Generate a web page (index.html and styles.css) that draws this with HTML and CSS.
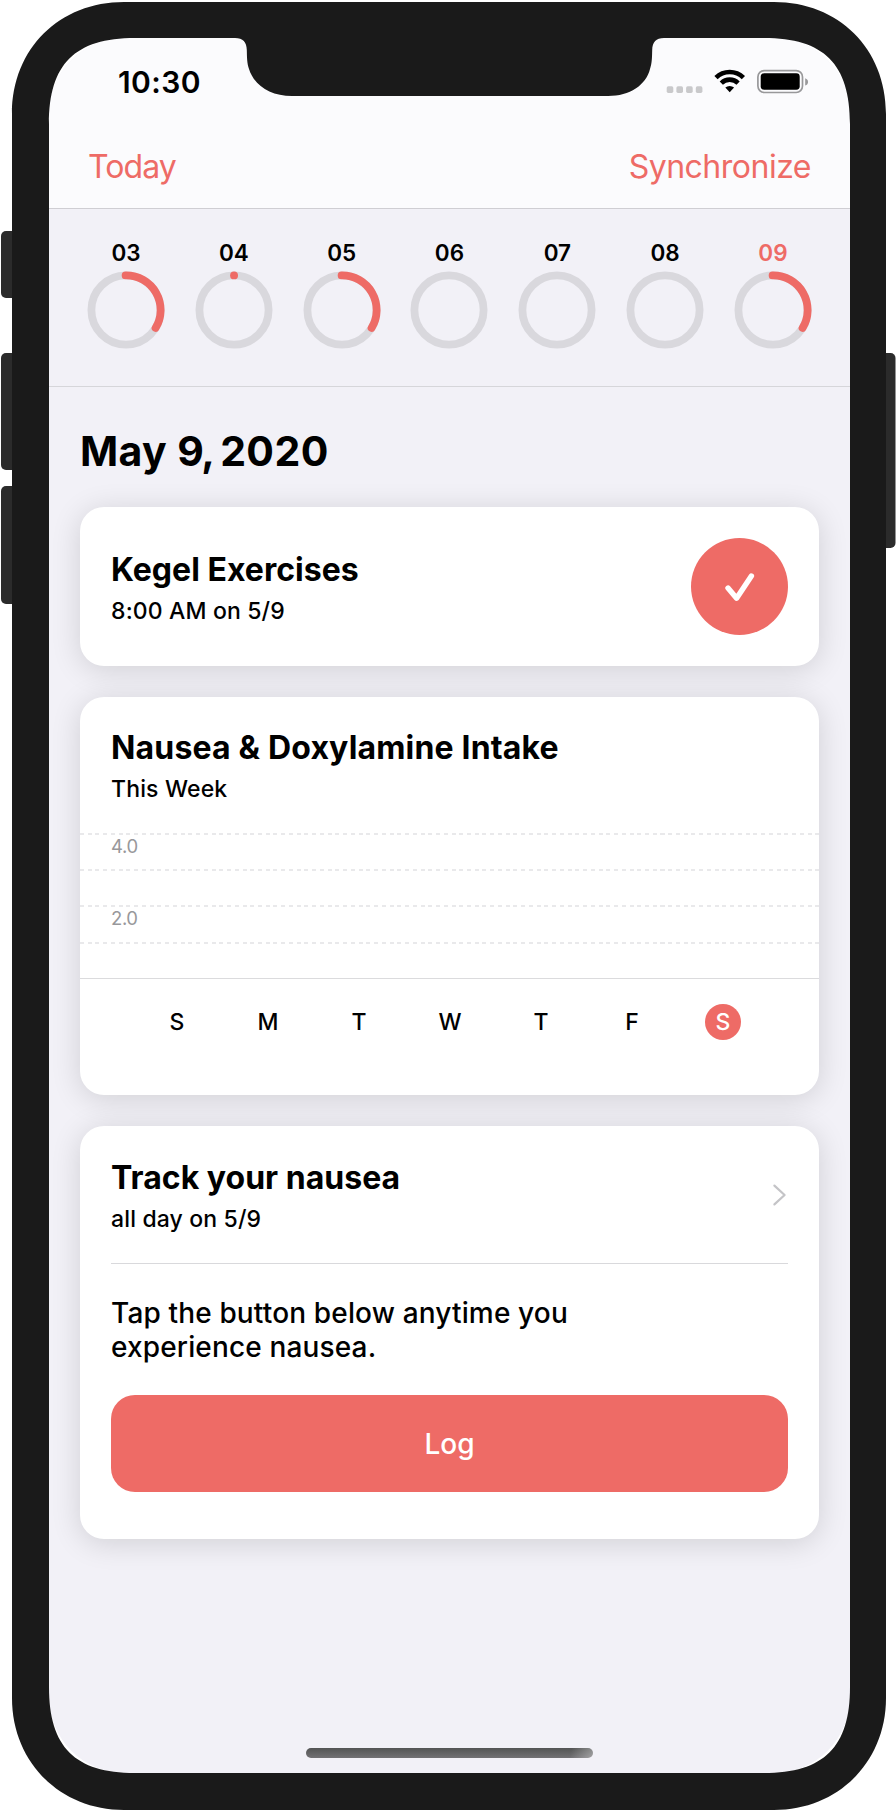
FILE: index.html
```html
<!DOCTYPE html>
<html lang="en">
<head>
<meta charset="utf-8">
<title>Care Plan</title>
<link rel="stylesheet" href="styles.css">
</head>
<body>
<div class="phone">
  <div class="screen">
    <header class="header">
      <div class="status">
        <span class="time">10:30</span>
        <svg class="status-icons" width="144" height="26" viewBox="0 0 144 26">
          <g fill="#c9c9cb">
            <rect x="1.7" y="17.3" width="6.6" height="6.6" rx="1.6"/>
            <rect x="11.4" y="17.3" width="6.6" height="6.6" rx="1.6"/>
            <rect x="21.1" y="17.3" width="6.6" height="6.6" rx="1.6"/>
            <rect x="30.8" y="17.3" width="6.6" height="6.6" rx="1.6"/>
          </g>
          <g fill="none" stroke="#000" stroke-width="4.6">
            <path d="M51 8.6a19.5 19.5 0 0 1 27.4 0"/>
            <path d="M56.3 14.1a12 12 0 0 1 16.8 0"/>
          </g>
          <path d="M60.3 18.6a6.6 6.6 0 0 1 8.8 0l-4.4 4.7z"/>
          <rect x="92.9" y="1.6" width="44.6" height="21.9" rx="6.4" fill="none" stroke="#98989a" stroke-width="1.7"/>
          <rect x="95.7" y="4.3" width="39" height="16.4" rx="3.4"/>
          <path d="M140.2 9.2c3.8 1.3 3.8 6.1 0 7.4z" fill="#98989a"/>
        </svg>
      </div>
      <nav class="nav">
        <a class="nav-today">Today</a>
        <a class="nav-sync">Synchronize</a>
      </nav>
    </header>
    <section class="week">
      <div class="day"><span>03</span><svg class="ring" viewBox="0 0 78 78"><circle cx="39" cy="39" r="34.6"/><path d="M38.6 4.4A34.6 34.6 0 0 1 68.6 57"/></svg></div>
      <div class="day"><span>04</span><svg class="ring" viewBox="0 0 78 78"><circle cx="39" cy="39" r="34.6"/><path d="M39 4.4h.1"/></svg></div>
      <div class="day"><span>05</span><svg class="ring" viewBox="0 0 78 78"><circle cx="39" cy="39" r="34.6"/><path d="M38.6 4.4A34.6 34.6 0 0 1 68.6 57"/></svg></div>
      <div class="day"><span>06</span><svg class="ring" viewBox="0 0 78 78"><circle cx="39" cy="39" r="34.6"/></svg></div>
      <div class="day"><span>07</span><svg class="ring" viewBox="0 0 78 78"><circle cx="39" cy="39" r="34.6"/></svg></div>
      <div class="day"><span>08</span><svg class="ring" viewBox="0 0 78 78"><circle cx="39" cy="39" r="34.6"/></svg></div>
      <div class="day current"><span>09</span><svg class="ring" viewBox="0 0 78 78"><circle cx="39" cy="39" r="34.6"/><path d="M38.6 4.4A34.6 34.6 0 0 1 68.6 57"/></svg></div>
    </section>
    <main class="main">
      <h1 class="date">May <span class="numeral">9</span><span class="comma">,</span> 2020</h1>
      <article class="card task">
        <div class="task-text">
          <h2 class="title kegel">Kegel Exercises</h2>
          <p class="subtitle at">8:00 AM on 5/9</p>
        </div>
        <svg class="check" width="97" height="97" viewBox="0 0 97 97">
          <circle cx="48.500" cy="48.500" r="48.5"/>
          <path d="M37 50L45.600 60.2L60.4 38"/>
        </svg>
      </article>
      <article class="card chart">
        <h2 class="title intake">Nausea &amp; Doxylamine Intake</h2>
        <p class="subtitle this-week">This Week</p>
        <div class="plot">
          <div class="band">4.0</div>
          <div class="band"></div>
          <div class="band tall">2.0</div>
          <div class="band"></div>
        </div>
        <div class="axis">
          <span>S</span><span>M</span><span>T</span><span>W</span><span>T</span><span>F</span><span class="selected">S</span>
        </div>
      </article>
      <article class="card log">
        <div class="log-head">
          <div>
            <h2 class="title track">Track your nausea</h2>
            <p class="subtitle all-day">all day on 5/9</p>
          </div>
          <svg class="chevron" width="16" height="24" viewBox="0 0 16 24"><path d="M3.4 2.6L13.6 12L3.4 21.4"/></svg>
        </div>
        <p class="hint">Tap the button below anytime you<br>experience nausea.</p>
        <button class="log-button">Log</button>
      </article>
    </main>
    <div class="home"></div>
  </div>
  <svg class="bezel" width="896" height="1812" viewBox="0 0 896 1812">
    <g fill="#2b2b2b">
      <rect x="1" y="231" width="20" height="67" rx="5"/>
      <rect x="1" y="353" width="20" height="117" rx="5"/>
      <rect x="1" y="486" width="20" height="118" rx="5"/>
      <rect x="875" y="353" width="20.5" height="195" rx="5"/>
    </g>
    <path fill="#1a1a1a" fill-rule="evenodd" d="M124 2H774C838 2 886 48 886 114V1698C886 1762 838 1810 774 1810H124C60 1810 12 1762 12 1698V114C12 48 60 2 124 2Z
      M135 38H235C243 38 246.600 42 246.800 50C247 58 247 63 249 69C254 85 270 96 292 96H608C630 96 646 85 650 69C652 63 652 58 652.200 50C652.400 42 656 38 664 38H764C824 38 850 64 850 124V1687C850 1747 824 1773 764 1773H135C75 1773 49 1747 49 1687V124C49 64 75 38 135 38Z"/>
  </svg>
</div>
</body>
</html>
```
FILE: styles.css
```css
* {
  box-sizing: border-box;
}

body {
  margin: 0;
  background: #fff;
  color: #000;
  font-family: Inter, "Liberation Sans", sans-serif;
}

h1, h2, p {
  margin: 0;
}

.phone {
  position: relative;
  width: 896px;
  height: 1812px;
  padding: 38px 46px 39px 49px;
  overflow: hidden;
}

.screen {
  display: flex;
  flex-direction: column;
  height: 1735px;
  border-radius: 76px;
  background: #f2f1f7;
}

/* The device frame lies over the screen and leaves the notch in place */
.bezel {
  position: absolute;
  inset: 0;
  pointer-events: none;
}

.header {
  height: 171px;
  border-bottom: 1px solid #cfced3;
  border-radius: 76px 76px 0 0;
  background: #fbfbfd;
}

.status {
  display: flex;
  align-items: center;
  justify-content: space-between;
  height: 88px;
  padding: 0 41px 0 69px;
}

.time {
  font-size: 30px;
  font-weight: 600;
  letter-spacing: 0.4px;
}

.nav {
  display: flex;
  align-items: center;
  justify-content: space-between;
  height: 80px;
  padding: 0 39px;
  color: #ee6b66;
  font-size: 32px;
}

.nav-today {
  letter-spacing: -0.9px;
}

.nav-sync {
  letter-spacing: -0.5px;
}

.week {
  display: flex;
  justify-content: space-between;
  height: 178px;
  padding: 30px 38px 0;
  border-bottom: 1px solid #d6d6da;
}

.day {
  display: flex;
  flex-direction: column;
  align-items: center;
  gap: 4px;
  width: 78px;
  font-size: 22.5px;
  font-weight: 600;
  line-height: 28px;
}

.current {
  color: #ee6b66;
}

.ring {
  width: 78px;
  height: 78px;
  fill: none;
  stroke: #d9d8dd;
  stroke-width: 7.8;
}

.ring path {
  stroke: #ee6b66;
  stroke-linecap: round;
}

.main {
  display: flex;
  flex-direction: column;
  gap: 31px;
  padding: 39px 31px 0;
}

.date {
  font-size: 41px;
  font-weight: 700;
  letter-spacing: 0.4px;
  line-height: 50px;
}

.numeral {
  letter-spacing: -2.6px;
}

.comma {
  letter-spacing: -5px;
}

.card {
  border-radius: 24px;
  background: #fff;
  box-shadow: 0 4px 30px rgba(0, 0, 0, 0.14);
}

.title {
  font-size: 32px;
  font-weight: 700;
  letter-spacing: 0.02px;
  line-height: 40px;
}

.intake {
  letter-spacing: 0.17px;
}

.subtitle {
  padding-top: 1px;
  font-size: 23px;
  font-weight: 500;
  letter-spacing: 0.15px;
  line-height: 40px;
}

.task {
  display: flex;
  align-items: center;
  justify-content: space-between;
  height: 159px;
  padding: 0 31px;
}

.task-text {
  padding-top: 7px;
}

.check {
  fill: #ee6b66;
}

.check path {
  fill: none;
  stroke: #fff;
  stroke-width: 5.4;
  stroke-linecap: round;
  stroke-linejoin: round;
}

.chart {
  height: 398px;
  padding-top: 31px;
}

.chart .title,
.chart .subtitle {
  padding-left: 31px;
}

.plot {
  margin-top: 24px;
  border-bottom: 1px solid #dbdbdd;
}

.band {
  height: 36px;
  padding-left: 31px;
  background: repeating-linear-gradient(90deg, #e9e9eb 0 4px, transparent 4px 7.74px) 0 0 / 100% 2px no-repeat;
  color: #98989b;
  font-size: 18.5px;
  letter-spacing: -0.4px;
  line-height: 26px;
}

.tall {
  height: 37px;
}

.axis {
  display: flex;
  justify-content: space-between;
  padding: 25px 78px 0 79px;
  font-size: 23px;
  font-weight: 500;
  line-height: 36px;
}

.axis span {
  width: 36px;
  border-radius: 50%;
  text-align: center;
}

.axis .selected {
  background: #ee6b66;
  color: #fff;
}

.log {
  height: 412.5px;
  padding: 31.5px 31px 0;
}

.log-head {
  display: flex;
  align-items: center;
  justify-content: space-between;
  height: 106px;
  padding-bottom: 24px;
  border-bottom: 1px solid #d9d9dc;
}

.chevron {
  margin: 0 1px 6px 0;
  fill: none;
  stroke: #c4c4c7;
  stroke-width: 2.2;
  stroke-linecap: round;
  stroke-linejoin: round;
}

.hint {
  margin-top: 32px;
  font-size: 28px;
  font-weight: 500;
  letter-spacing: 0.15px;
  line-height: 34.5px;
}

.log-button {
  display: block;
  width: 100%;
  height: 97px;
  margin-top: 30px;
  padding: 2px 0 0;
  border: 0;
  border-radius: 24px;
  background: #ee6b66;
  color: #fff;
  font: 500 28px Inter, "Liberation Sans", sans-serif;
}

.home {
  width: 287px;
  height: 10px;
  margin: auto auto 15.5px 257px;
  border-radius: 5px;
  background: linear-gradient(100deg, transparent 92%, rgba(255, 255, 255, 0.35) 100%), linear-gradient(#535454, #727174);
}
```
